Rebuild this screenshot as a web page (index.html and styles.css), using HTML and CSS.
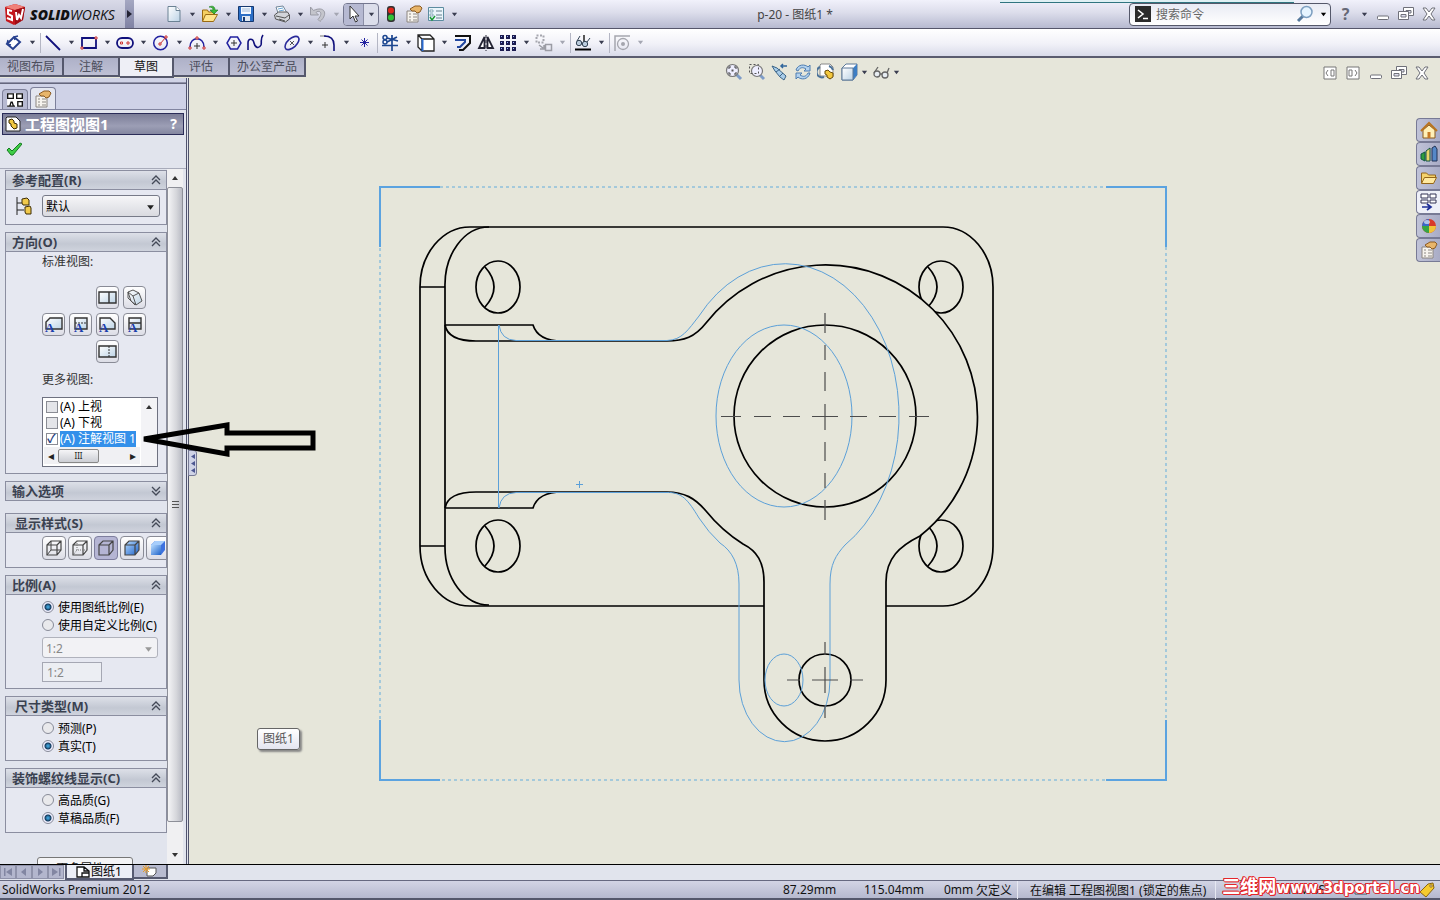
FILE: index.html
```
<!DOCTYPE html>
<html lang="zh-CN">
<head>
    <meta charset="UTF-8">
    <meta name="viewport" content="width=device-width, initial-scale=1.0">
    <title>p-20 - 图纸1</title>
    <link rel="stylesheet" href="styles.css">
</head>
<body>
    <!-- iconos compartidos -->
    <svg class="defs" width="0" height="0">
        <defs>
            <linearGradient id="gBlue" x1="0" y1="0" x2="1" y2="1"><stop offset="0" stop-color="#b8dcff"/><stop offset="1" stop-color="#1d62c9"/></linearGradient>
            <linearGradient id="gPale" x1="0" y1="0" x2="1" y2="1"><stop offset="0" stop-color="#fff"/><stop offset="1" stop-color="#bcd3e6"/></linearGradient>
        </defs>
        <symbol id="down" viewBox="0 0 8 8"><path d="M1 2h6L4 6z" fill="currentColor"/></symbol>
        <symbol id="props" viewBox="0 0 18 18"><path d="M2 6h11v11H2z" fill="#f6f3ee" stroke="#8b8580"/><path d="M4 9h2M8 9h4M4 12h2M8 12h4M4 15h2M8 15h4" stroke="#8d8985"/><path d="M5 4l5-3h5l2 2-2 4-3 1-2-2H7z" fill="#e8b56a" stroke="#8c5b22"/></symbol>
        <symbol id="minw" viewBox="0 0 16 16"><rect x="2.500" y="10" width="11" height="3.500" rx="1" fill="#fff" stroke="#6f7079"/></symbol>
        <symbol id="restore" viewBox="0 0 16 16"><path d="M5.500 1.500h10v8h-10z" fill="#fff" stroke="#6f7079"/><path d="M8 4.500h5v2.500H8z" fill="#dde" stroke="#6f7079"/><path d="M.5 5.500h10v8H.5z" fill="#fff" stroke="#6f7079"/><path d="M3 8.500h5V11H3z" fill="#dde" stroke="#6f7079"/></symbol>
        <symbol id="closew" viewBox="0 0 16 16"><path d="M2 2h3l3 4 3-4h3l-4 6 4 6h-3l-3-4-3 4H2l4-6z" fill="#fff" stroke="#6f7079"/></symbol>
        <symbol id="layout" viewBox="0 0 16 16"><path d="M1 2h14v12H1z" fill="#fff"/><path d="M1.500 2.500h5v4h-5zM9.500 2.500h5v4h-5zM1 13.500h7M3.500 13l1-3h1l1 3M10.500 9.500h4v4h-4z" fill="#fff" stroke="#111" stroke-width="1.200"/></symbol>
        <symbol id="up2" viewBox="0 0 10 10"><path d="M1 5l4-4 4 4M1 9l4-4 4 4" fill="none" stroke="#444a58" stroke-width="1.300"/></symbol>
        <symbol id="cube" viewBox="0 0 18 18"><path d="M2 6l4-4h10v9l-4 5H2zM2 6h10v10M12 6l4-4" stroke="#444" stroke-width="1.200"/></symbol>
        <symbol id="part" viewBox="0 0 16 16"><path d="M2 1h9l4 4v10H1V2z" fill="#fff" stroke="#222"/><path d="M4 4l3-1 2 2v2l3 1v4l-3 1-3-3V8L4 7z" fill="#f0c840" stroke="#3a2a00"/></symbol>
    </svg>

    <header class="titlebar">
        <div class="brand">
            <svg width="24" height="22" viewBox="0 0 24 22"><path d="M3 4l10-3 10 3-2 13-9 5-8-4z" fill="#c5161c"/><path d="M3 4l10-3 10 3-10 3z" fill="#f08078"/><path d="M13 7v15l8-5 2-13z" fill="#a00c14"/><path d="M10 8L6 7v4l4 2v4l-5-2M14 9l1 8 2-5 2 3 2-9" fill="none" stroke="#fff" stroke-width="2"/></svg>
            <span class="brand-name"><b>SOLID</b>WORKS</span>
        </div>
        <button class="brand-more" aria-label="菜单"><svg width="5" height="8" viewBox="0 0 5 8"><path d="M0 0l5 4-5 4z" fill="#223"/></svg></button>
        <nav class="tools quick">
            <button class="tool" aria-label="新建"><svg width="18" height="18" viewBox="0 0 18 18"><path d="M3 1.500h8l4 4v11H3z" fill="url(#gPale)" stroke="#6b8294"/><path d="M11 1.500v4h4" fill="#fff" stroke="#6b8294"/></svg></button>
            <button class="arrow" aria-label="更多"><svg><use href="#down"/></svg></button>
            <button class="tool" aria-label="打开"><svg width="18" height="18" viewBox="0 0 18 18"><path d="M1.500 16V5h5l1 2h6v3" fill="#f5cf62" stroke="#9a6a12"/><path d="M1.500 16.500l3-7h12l-4 7z" fill="#ffe48c" stroke="#9a6a12"/><path d="M8 2c4-2 6 0 6 3h3l-4 4-4-4h3c0-2-1-3-4-3z" fill="#3db83a" stroke="#187a1c" stroke-width=".6"/></svg></button>
            <button class="arrow" aria-label="更多"><svg><use href="#down"/></svg></button>
            <button class="tool" aria-label="保存"><svg width="18" height="18" viewBox="0 0 18 18"><path d="M1.500 1.500h15v15h-13l-2-2z" fill="#2c6fc6" stroke="#16386f"/><path d="M4 2h10v7H4z" fill="#f4f9ff"/><path d="M5 4h8M5 6h8" stroke="#9fb8d8"/><path d="M5 11h8v5H5z" fill="#dfe8f2"/><path d="M6 12h2v4H6z" fill="#16386f"/></svg></button>
            <button class="arrow" aria-label="更多"><svg><use href="#down"/></svg></button>
            <button class="tool" aria-label="打印"><svg width="18" height="18" viewBox="0 0 18 18"><path d="M5 8L3 2l7-1 4 7z" fill="#fff" stroke="#71879a"/><path d="M5 4l5-1M6 6l5-1" stroke="#69a7d8"/><path d="M1.500 10l4-3h9l2 3v4l-4 3-10-3z" fill="#d2d5da" stroke="#555"/><path d="M3 11l9 2 4-3M6 14l6 2" stroke="#555" fill="none"/></svg></button>
            <button class="arrow" aria-label="更多"><svg><use href="#down"/></svg></button>
            <button class="tool" aria-label="撤消"><svg width="18" height="18" viewBox="0 0 18 18"><path d="M1.500 2v8h8L7 7.500c3-3 8 0 2 7l2 2c9-8 4-16-6.500-11z" fill="#c4c5cc" stroke="#9a9ba5"/></svg></button>
            <button class="arrow off" aria-label="更多"><svg><use href="#down"/></svg></button>
            <div class="picked">
                <button class="tool" aria-label="选择"><svg width="18" height="18" viewBox="0 0 18 18"><path d="M5 1v13l3-3 2.500 6 2-1-2.500-5h4z" fill="#fff" stroke="#333"/></svg></button>
                <button class="arrow" aria-label="更多"><svg><use href="#down"/></svg></button>
            </div>
            <button class="tool solo" aria-label="重建模型"><svg width="18" height="18" viewBox="0 0 18 18"><rect x="5" y="1" width="8" height="16" rx="3" fill="#333"/><circle cx="9" cy="5.500" r="3" fill="#e0261c"/><circle cx="9" cy="12.500" r="3" fill="#2fc235"/></svg></button>
            <button class="tool solo" aria-label="属性"><svg width="18" height="18"><use href="#props"/></svg></button>
            <button class="tool" aria-label="选项"><svg width="18" height="18" viewBox="0 0 18 18"><path d="M1.500 2.500h15v13h-15z" fill="#eaf5fb" stroke="#5c8ca0"/><path d="M3 5h3v2H3zM3 9h3v2H3z" fill="#fff" stroke="#5c8ca0" stroke-width=".7"/><path d="M9 6h6M9 10h6M9 13h6" stroke="#67828f"/><path d="M3 12l2 3 3-4" fill="none" stroke="#1a9a35" stroke-width="1.500"/></svg></button>
            <button class="arrow" aria-label="更多"><svg><use href="#down"/></svg></button>
        </nav>
        <h1 class="doc-title">p-20 - 图纸1 *</h1>
        <div class="search">
            <svg width="16" height="16" viewBox="0 0 16 16"><rect width="16" height="16" fill="#2b2b2b"/><path d="M3 4l5 4-5 4M8 12.500h5" fill="none" stroke="#fff" stroke-width="1.600"/></svg>
            <input type="text" aria-label="搜索命令" placeholder="搜索命令">
            <button class="find" aria-label="搜索"><svg width="18" height="18" viewBox="0 0 18 18"><path d="M7 11l-5 5" stroke="#56799c" stroke-width="3"/><circle cx="10.500" cy="7" r="5.500" fill="#e6f4ff" stroke="#7d9fc0" stroke-width="1.500"/></svg></button>
            <button class="arrow dark" aria-label="更多"><svg><use href="#down"/></svg></button>
        </div>
        <div class="window-buttons">
            <button class="tool solo help" aria-label="帮助">?</button>
            <button class="arrow" aria-label="更多"><svg><use href="#down"/></svg></button>
            <button class="tool solo" aria-label="最小化"><svg width="16" height="16"><use href="#minw"/></svg></button>
            <button class="tool solo" aria-label="还原"><svg width="16" height="16"><use href="#restore"/></svg></button>
            <button class="tool solo" aria-label="关闭"><svg width="16" height="16"><use href="#closew"/></svg></button>
        </div>
    </header>

    <nav class="tools sketchbar">
        <button class="tool" aria-label="智能尺寸"><svg width="18" height="18" viewBox="0 0 18 18"><path d="M2 10l7-7 6 5-7 7z" fill="#fff" stroke="#27408f" stroke-width="2"/><path d="M2 10l1-4M2 10l4 1M9 3l4-1M9 3l1 3" stroke="#27408f" stroke-width="1.500"/></svg></button>
        <button class="arrow" aria-label="更多"><svg><use href="#down"/></svg></button>
        <span class="sep"></span>
        <button class="tool" aria-label="直线"><svg width="18" height="18" viewBox="0 0 18 18"><path d="M2 2l14 14" stroke="#10107c" stroke-width="1.800"/></svg></button>
        <button class="arrow" aria-label="更多"><svg><use href="#down"/></svg></button>
        <button class="tool" aria-label="矩形"><svg width="18" height="18" viewBox="0 0 18 18"><path d="M2 4h14v10H2z" fill="none" stroke="#10107c" stroke-width="1.800"/><path d="M1 13h2v2H1zM15 3h2v2h-2z" fill="#fff" stroke="#c33"/></svg></button>
        <button class="arrow" aria-label="更多"><svg><use href="#down"/></svg></button>
        <button class="tool" aria-label="槽口"><svg width="18" height="18" viewBox="0 0 18 18"><rect x="1" y="4" width="16" height="10" rx="5" fill="none" stroke="#10107c" stroke-width="1.800"/><path d="M4.500 8h2v2h-2zM11 8h2v2h-2z" fill="#fff" stroke="#c33"/></svg></button>
        <button class="arrow" aria-label="更多"><svg><use href="#down"/></svg></button>
        <button class="tool" aria-label="圆"><svg width="18" height="18" viewBox="0 0 18 18"><circle cx="8.500" cy="9" r="6.800" fill="none" stroke="#2222a0" stroke-width="1.500"/><path d="M8 10l6-7" stroke="#c33"/><path d="M7 9h2v2H7zM13 2h2v2h-2z" fill="#fff" stroke="#c33"/></svg></button>
        <button class="arrow" aria-label="更多"><svg><use href="#down"/></svg></button>
        <button class="tool" aria-label="圆弧"><svg width="18" height="18" viewBox="0 0 18 18"><path d="M2 13C2 2 16 2 16 13" fill="none" stroke="#2222a0" stroke-width="1.500"/><path d="M9 9v6M6 12h6" stroke="#333"/><path d="M1 13h2v2H1zM15 13h2v2h-2zM8 3h2v2H8z" fill="#fff" stroke="#c33"/></svg></button>
        <button class="arrow" aria-label="更多"><svg><use href="#down"/></svg></button>
        <button class="tool solo" aria-label="多边形"><svg width="18" height="18" viewBox="0 0 18 18"><path d="M5.500 3h7L16 9l-3.500 6h-7L2 9z" fill="none" stroke="#2222a0" stroke-width="1.500"/><path d="M9 6v6M6 9h6" stroke="#333"/></svg></button>
        <button class="tool" aria-label="样条曲线"><svg width="18" height="18" viewBox="0 0 18 18"><path d="M1 16V9c0-5 5-5 6 0s5 6 7 2c1-3-1-6 2-10" fill="none" stroke="#10107c" stroke-width="1.600"/></svg></button>
        <button class="arrow" aria-label="更多"><svg><use href="#down"/></svg></button>
        <button class="tool" aria-label="椭圆"><svg width="18" height="18" viewBox="0 0 18 18"><ellipse cx="9" cy="9" rx="8.500" ry="4.500" transform="rotate(-42 9 9)" fill="none" stroke="#2a2a9a" stroke-width="1.600"/><path d="M7 7l4 4M11 7l-4 4" stroke="#555"/></svg></button>
        <button class="arrow" aria-label="更多"><svg><use href="#down"/></svg></button>
        <button class="tool" aria-label="圆角"><svg width="18" height="18" viewBox="0 0 18 18"><path d="M1 2h6" stroke="#777"/><path d="M5 2c8 0 10 4 10 9v6" fill="none" stroke="#10107c" stroke-width="1.600"/><path d="M6 8v6M3 11h6" stroke="#333"/></svg></button>
        <button class="arrow" aria-label="更多"><svg><use href="#down"/></svg></button>
        <button class="tool solo" aria-label="点"><svg width="18" height="18" viewBox="0 0 18 18"><path d="M8.500 4v9M4 8.500h9M5.500 5.500l6 6M11.500 5.500l-6 6" stroke="#2222a0"/></svg></button>
        <span class="sep"></span>
        <button class="tool" aria-label="剪裁"><svg width="18" height="18" viewBox="0 0 18 18"><path d="M1 11.500h16M11 1v16M6 8l10-5M6 4l11 3" stroke="#1b458f" stroke-width="1.700"/><circle cx="4" cy="3.500" r="2" fill="none" stroke="#1b458f" stroke-width="1.500"/><circle cx="4" cy="8" r="2" fill="none" stroke="#1b458f" stroke-width="1.500"/></svg></button>
        <button class="arrow" aria-label="更多"><svg><use href="#down"/></svg></button>
        <button class="tool" aria-label="转换实体"><svg width="18" height="18" viewBox="0 0 18 18"><path d="M1 1h12l4 4v12H5l-4-4zM1 1l4 4h12M5 5v12" fill="#fff" stroke="#222" stroke-width="1.300"/><path d="M5.500 5v12" stroke="#2a6ad0" stroke-width="2"/></svg></button>
        <button class="arrow" aria-label="更多"><svg><use href="#down"/></svg></button>
        <button class="tool solo" aria-label="等距实体"><svg width="18" height="18" viewBox="0 0 18 18"><path d="M1 2h15v7l-7 7H5" fill="none" stroke="#111" stroke-width="2"/><path d="M1 6h10v2l-5 5H3" fill="none" stroke="#2348a0" stroke-width="2"/></svg></button>
        <button class="tool solo" aria-label="镜向"><svg width="18" height="18" viewBox="0 0 18 18"><path d="M7.500 3v11H2zM10.500 3v11H16z" fill="#fff" stroke="#223" stroke-width="1.800"/><path d="M9 1v16" stroke="#223" stroke-dasharray="3 2"/></svg></button>
        <button class="tool" aria-label="线性阵列"><svg width="18" height="18" viewBox="0 0 18 18"><path d="M1 1h4v4H1zM7 1h4v4H7zM13 1h4v4h-4zM1 7h4v4H1zM7 7h4v4H7zM13 7h4v4h-4zM1 13h4v4H1zM7 13h4v4H7zM13 13h4v4h-4z" fill="#1c1c50"/><path d="M2 2h1v1H2zM8 2h1v1H8zM14 2h1v1h-1zM2 8h1v1H2zM8 8h1v1H8zM14 8h1v1h-1zM2 14h1v1H2zM8 14h1v1H8zM14 14h1v1h-1z" fill="#9cb4ff"/></svg></button>
        <button class="arrow" aria-label="更多"><svg><use href="#down"/></svg></button>
        <button class="tool" aria-label="移动实体"><svg width="18" height="18" viewBox="0 0 18 18"><path d="M1.500 1.500h7v7h-7z" fill="none" stroke="#a5a6ae" stroke-width="2" stroke-dasharray="2 1.500"/><path d="M10.500 10.500h6v6h-6zM4 11l4 3M5 15h4v-4" fill="none" stroke="#9b9ca4" stroke-width="1.500"/></svg></button>
        <button class="arrow off" aria-label="更多"><svg><use href="#down"/></svg></button>
        <span class="sep"></span>
        <button class="tool" aria-label="显示几何关系"><svg width="18" height="18" viewBox="0 0 18 18"><path d="M1 15.500h16" stroke="#000" stroke-width="2"/><path d="M10 1v11" stroke="#222" stroke-width="1.500"/><circle cx="5" cy="9" r="2.700" fill="#bcd" stroke="#345"/><circle cx="11" cy="10" r="2.700" fill="#bcd" stroke="#345"/><path d="M3 7l3-5M13 8l3-4" stroke="#345"/></svg></button>
        <button class="arrow" aria-label="更多"><svg><use href="#down"/></svg></button>
        <span class="sep"></span>
        <button class="tool" aria-label="快速捕捉"><svg width="18" height="18" viewBox="0 0 18 18"><path d="M2 17V2h15" fill="none" stroke="#a5a6ae" stroke-width="1.500"/><circle cx="10" cy="10" r="5.500" fill="none" stroke="#a5a6ae" stroke-width="1.300"/><circle cx="10" cy="10" r="2" fill="#a5a6ae"/></svg></button>
        <button class="arrow off" aria-label="更多"><svg><use href="#down"/></svg></button>
    </nav>

    <main class="workspace">
        <div class="top-row">
            <div class="ribbon-tabs">
                <button>视图布局</button>
                <button>注解</button>
                <button class="active">草图</button>
                <button>评估</button>
                <button>办公室产品</button>
            </div>
            <div class="view-tools">
                <button class="tool solo" aria-label="整屏显示"><svg width="18" height="18" viewBox="0 0 18 18"><path d="M11 11l5 5" stroke="#7e9cc8" stroke-width="3"/><circle cx="7.500" cy="7.500" r="6" fill="#eef" stroke="#777" stroke-width="1.200"/><path d="M4 6V4h2M9 4h2v2M11 9v2H9M6 11H4V9" fill="none" stroke="#444"/><path d="M6.500 6.500h2v2h-2z" fill="#555"/></svg></button>
                <button class="tool solo" aria-label="局部放大"><svg width="18" height="18" viewBox="0 0 18 18"><path d="M12 12l4 4" stroke="#7e9cc8" stroke-width="3"/><circle cx="9" cy="8" r="5.500" fill="#eef" stroke="#777" stroke-width="1.200"/><path d="M1.500 1.500h9v9h-9z" fill="none" stroke="#555" stroke-dasharray="2 2"/></svg></button>
                <button class="tool solo" aria-label="上一视图"><svg width="18" height="18" viewBox="0 0 18 18"><path d="M1 3l5 2 9 8-2 4-4-3-5-6z" fill="#a9cdea" stroke="#3a6386"/><path d="M5 9l4-3M9 13l3-3" stroke="#3a6386"/><path d="M16 3h-6M12 1l-2 2 2 2" fill="none" stroke="#31669c" stroke-width="1.500"/></svg></button>
                <button class="tool solo" aria-label="旋转视图"><svg width="18" height="18" viewBox="0 0 18 18"><path d="M2 7c2-6 9-6 12-3l2-2v6h-6l2-2C9 4 6 4 4 8zM16 10c-2 7-9 7-12 4l-2 2v-6h6l-2 2c3 2 6 2 8-2z" fill="#b3d2ef" stroke="#4e7db0"/></svg></button>
                <button class="tool solo" aria-label="3D 工程图视图"><svg width="18" height="18" viewBox="0 0 18 18"><path d="M4 1h9l3 3v9H3V2z" fill="#fff" stroke="#888"/><path d="M3 4a5 5 0 0 0 4 10M12 3a6 6 0 0 1 4 4" fill="none" stroke="#4b7299" stroke-width="2"/><path d="M8 8l3-1 2 2 3 1v4l-3 2-3-2v-2l-2-1z" fill="#f3c83e" stroke="#6b4c07"/></svg></button>
                <button class="tool" aria-label="显示样式"><svg width="18" height="18" viewBox="0 0 18 18"><path d="M2 5l4-4h11v11l-4 5H2z" fill="#fff" stroke="#5c7898"/><path d="M13 5l4-4v11l-4 5z" fill="#3d7ec4"/><path d="M2 5h11v12H2z" fill="url(#gPale)" stroke="#5c7898"/></svg></button>
                <button class="arrow narrow" aria-label="更多"><svg><use href="#down"/></svg></button>
                <button class="tool" aria-label="隐藏项目"><svg width="18" height="18" viewBox="0 0 18 18"><circle cx="5" cy="11" r="3" fill="#e7edf2" stroke="#666" stroke-width="1.300"/><circle cx="13" cy="12" r="3" fill="#e7edf2" stroke="#666" stroke-width="1.300"/><path d="M8 11h2M2 10l4-6M15 10l2-5" fill="none" stroke="#666" stroke-width="1.300"/></svg></button>
                <button class="arrow narrow" aria-label="更多"><svg><use href="#down"/></svg></button>
            </div>
            <div class="window-buttons child">
                <button class="tool solo" aria-label="左窗格"><svg width="14" height="14" viewBox="0 0 14 14"><path d="M1 1h12v12H1z" fill="#fff" stroke="#777"/><path d="M5 4L3 7l2 3M8 4h3v6H8z" fill="none" stroke="#777"/></svg></button>
                <button class="tool solo" aria-label="右窗格"><svg width="14" height="14" viewBox="0 0 14 14"><path d="M1 1h12v12H1z" fill="#fff" stroke="#777"/><path d="M9 4l2 3-2 3M3 4h3v6H3z" fill="none" stroke="#777"/></svg></button>
                <button class="tool solo" aria-label="最小化"><svg width="16" height="16"><use href="#minw"/></svg></button>
                <button class="tool solo" aria-label="还原"><svg width="16" height="16"><use href="#restore"/></svg></button>
                <button class="tool solo" aria-label="关闭"><svg width="16" height="16"><use href="#closew"/></svg></button>
            </div>
        </div>

        <div class="content">
            <aside class="panel">
                <div class="panel-grip"></div>
                <div class="panel-tabs">
                    <button aria-label="设计树"><svg width="18" height="18"><use href="#layout"/></svg></button>
                    <button class="active" aria-label="属性管理器"><svg width="18" height="18"><use href="#props"/></svg></button>
                </div>
                <div class="panel-title">
                    <svg width="16" height="16"><use href="#part"/></svg>
                    <h2>工程图视图1</h2>
                    <button aria-label="帮助">?</button>
                </div>
                <div class="panel-ok">
                    <button aria-label="确定"><svg width="16" height="14" viewBox="0 0 16 14"><path d="M1 8l2-2 3 3 8-8 2 1-9 11H5z" fill="#3fce46" stroke="#167a22"/></svg></button>
                </div>
                <div class="panel-scroll">
                    <div class="groups">
                        <section class="group">
                            <h3>参考配置(R)<svg width="10" height="10"><use href="#up2"/></svg></h3>
                            <div class="config">
                                <svg width="16" height="18" viewBox="0 0 16 18"><path d="M1 0v18M1 6h5M1 13h7" stroke="#222" fill="none"/><path d="M6 2l5-1 2 2v5H7L6 6zM9 10l5-1 1 2v6h-5l-1-2z" fill="#f1c94b" stroke="#3c2c05"/></svg>
                                <div class="combo">
                                    <select aria-label="参考配置"><option>默认</option></select>
                                    <svg><use href="#down"/></svg>
                                </div>
                            </div>
                        </section>

                        <section class="group">
                            <h3>方向(O)<svg width="10" height="10"><use href="#up2"/></svg></h3>
                            <div class="indent">
                                <p class="caption">标准视图:</p>
                                <div class="std-views">
                                    <button class="c3" aria-label="上视"><svg width="19" height="17" viewBox="0 0 19 17"><path d="M1 3h17v11H1z" fill="url(#gPale)" stroke="#333" stroke-width="1.400"/><path d="M11 3v11" stroke="#333" stroke-width="1.400"/></svg></button>
                                    <button aria-label="等轴测"><svg width="19" height="17" viewBox="0 0 19 17"><path d="M3 3l5-2 6 3 3 8-6 4-5-4zM3 3l5 4 3 9M8 7l6-3M3 3v6l7 7" fill="url(#gPale)" stroke="#555"/></svg></button>
                                    <button class="c1" aria-label="前视"><svg width="19" height="17" viewBox="0 0 19 17"><path d="M6 2h12v11H2V6z" fill="url(#gPale)" stroke="#333" stroke-width="1.400"/><text x="1" y="16">A</text></svg></button>
                                    <button aria-label="左视"><svg width="19" height="17" viewBox="0 0 19 17"><path d="M4 2h12v11H4z" fill="url(#gPale)" stroke="#333" stroke-width="1.400"/><path d="M4 7h12" stroke="#333" stroke-dasharray="2 1"/><text x="3" y="16">A</text></svg></button>
                                    <button aria-label="后视"><svg width="19" height="17" viewBox="0 0 19 17"><path d="M2 2h10l5 5v6H2z" fill="url(#gPale)" stroke="#333" stroke-width="1.400"/><text x="1" y="16">A</text></svg></button>
                                    <button aria-label="右视"><svg width="19" height="17" viewBox="0 0 19 17"><path d="M4 2h12v11H4zM4 7h12" fill="url(#gPale)" stroke="#333" stroke-width="1.400"/><text x="3" y="16">A</text></svg></button>
                                    <button class="c3" aria-label="下视"><svg width="19" height="17" viewBox="0 0 19 17"><path d="M1 3h17v11H1z" fill="url(#gPale)" stroke="#333" stroke-width="1.400"/><path d="M11 3v11" stroke="#333" stroke-dasharray="2 1"/></svg></button>
                                </div>
                                <p class="caption more">更多视图:</p>
                                <div class="listbox">
                                    <label><input type="checkbox"><span>(A) 上视</span></label>
                                    <label><input type="checkbox"><span>(A) 下视</span></label>
                                    <label><input type="checkbox" checked><span class="sel">(A) 注解视图 1</span></label>
                                    <div class="hscroll"><span>◂</span><i>III</i><span>▸</span></div>
                                    <span class="vscroll"></span>
                                </div>
                            </div>
                        </section>

                        <section class="group folded">
                            <h3>输入选项<svg class="flip" width="10" height="10"><use href="#up2"/></svg></h3>
                        </section>

                        <section class="group">
                            <h3 class="in">显示样式(S)<svg width="10" height="10"><use href="#up2"/></svg></h3>
                            <div class="styles-row">
                                <button aria-label="线架图"><svg width="18" height="18" viewBox="0 0 18 18" fill="none"><use href="#cube"/><path d="M6 2v9h10M6 11l-4 5" stroke="#444"/></svg></button>
                                <button aria-label="隐藏线可见"><svg width="18" height="18" viewBox="0 0 18 18" fill="none"><use href="#cube"/><path d="M6 2v9h10M6 11l-4 5" stroke="#777" stroke-dasharray="1 1"/></svg></button>
                                <button class="on" aria-label="消除隐藏线"><svg width="18" height="18" fill="none"><use href="#cube"/></svg></button>
                                <button aria-label="带边线上色"><svg width="18" height="18" fill="url(#gBlue)"><use href="#cube"/></svg></button>
                                <button aria-label="上色"><svg width="18" height="18" viewBox="0 0 18 18"><path d="M2 6l4-4h10v9l-4 5H2z" fill="#3e72df"/><path d="M2 6l4-4h10l-4 4z" fill="#a6cdfb"/><path d="M2 6h10v10H2z" fill="url(#gBlue)"/></svg></button>
                            </div>
                        </section>

                        <section class="group">
                            <h3>比例(A)<svg width="10" height="10"><use href="#up2"/></svg></h3>
                            <div class="indent radios">
                                <label><input type="radio" name="scale" checked>使用图纸比例(E)</label>
                                <label><input type="radio" name="scale">使用自定义比例(C)</label>
                                <div class="combo off">
                                    <select aria-label="比例" disabled><option>1:2</option></select>
                                    <svg><use href="#down"/></svg>
                                </div>
                                <input class="ratio" type="text" aria-label="自定义比例" value="1:2" disabled>
                            </div>
                        </section>

                        <section class="group">
                            <h3 class="in">尺寸类型(M)<svg width="10" height="10"><use href="#up2"/></svg></h3>
                            <div class="indent radios roomy">
                                <label><input type="radio" name="dim">预测(P)</label>
                                <label><input type="radio" name="dim" checked>真实(T)</label>
                            </div>
                        </section>

                        <section class="group">
                            <h3>装饰螺纹线显示(C)<svg width="10" height="10"><use href="#up2"/></svg></h3>
                            <div class="indent radios roomy">
                                <label><input type="radio" name="thread">高品质(G)</label>
                                <label><input type="radio" name="thread" checked>草稿品质(F)</label>
                            </div>
                        </section>
                        <button class="more-props">更多属性...</button>
                    </div>
                    <div class="scrollbar"><span class="up"></span><div class="thumb"><i></i></div><span class="dn"></span></div>
                </div>
                <div class="splitter">
                    <svg width="4" height="20" viewBox="0 0 4 20"><path d="M4 0v5L0 2.500zM4 7v5L0 9.500zM4 14v5L0 16.500z" fill="#4c5790"/></svg>
                </div>
            </aside>

            <div class="sheet">
                <svg class="drawing" viewBox="189 78 1251 786" preserveAspectRatio="xMinYMin meet" fill="none">
                    <!-- marco de la vista -->
                    <path d="M380 187H1166V780H380z" stroke="#8fc0dc" stroke-width="1.500" stroke-dasharray="3 3"/>
                    <path d="M440 187H380V247M1106 187H1166V247M440 780H380V720M1106 780H1166V720" stroke="#5ba3e0" stroke-width="2"/>
                    <!-- placa base -->
                    <g stroke="#000" stroke-width="1.700">
                        <path d="M764 606H470A50 60 0 0 1 420 546V287A50 60 0 0 1 470 227H943A50 60 0 0 1 993 287V546A50 60 0 0 1 943 606H886"/>
                        <path d="M489 227A44 58 0 0 0 445 287V546A44 58 0 0 0 489 605M420 287H445M420 546H445"/>
                        <ellipse cx="498" cy="287" rx="22" ry="26"/><path d="M485 267Q503 287 485 307"/>
                        <ellipse cx="498" cy="546" rx="22" ry="26"/><path d="M485 526Q503 546 485 566"/>
                        <ellipse cx="941" cy="287" rx="22" ry="26"/><path d="M928 267Q946 287 928 307"/>
                        <ellipse cx="941" cy="546" rx="22" ry="26"/><path d="M928 526Q946 546 928 566"/>
                        <path d="M445 325H533Q538 341 562 341M445 325Q448 341 476 341H667"/>
                        <path d="M445 508H533Q538 492 562 492M445 508Q448 492 476 492H667"/>
                        <!-- brazo -->
                        <path fill="#e6e6da" d="M667 341C684 341 695 337 706 323A152 152 0 1 1 920 536C900 546 886 558 886 582V680A61 61 0 0 1 764 680V582C764 562 757 551 743 544A152 152 0 0 1 706 511C695 498 684 492 667 492"/>
                        <circle cx="825" cy="416" r="91"/>
                        <circle cx="825" cy="680" r="26"/>
                    </g>
                    <!-- silueta resaltada -->
                    <g stroke="#5ca0d8">
                        <path d="M498.500 325V508M499 325Q501 340 516 340.500H667C682 340 688 330 699 316A114 152 0 1 1 845 545C836 555 830 564 830 584V680A45 61 0 0 1 739 680V584C739 564 732 551 720 543A114 152 0 0 1 699 518C688 500 682 492 667 492.500H516Q501 493 499 508"/>
                        <ellipse cx="784" cy="416" rx="68" ry="91"/>
                        <ellipse cx="784" cy="680" rx="19" ry="26"/>
                        <path d="M576 484.500h7M579.500 481v7"/>
                    </g>
                    <path stroke="#4c4c4c" stroke-width="1.200" d="M721 416.500h20M754 416.500h17M783 416.500h17M812 416.500h26M850 416.500h17M879 416.500h17M909 416.500h20M825 313v20M825 372v19M825 404v26M825 442v19M825 500v20M787 680h13M812 680h26M850 680h13M825 642v13M825 667v26M825 705v13M825 345v15M825 473v15"/>
                </svg>
                <span class="tip">图纸1</span>
                <div class="task-pane">
                    <button aria-label="资源"><svg width="18" height="18" viewBox="0 0 18 18"><path d="M3 9v8h12V9L9 4z" fill="#fff0b8" stroke="#8b5a1d"/><path d="M1 10l8-8 8 8" fill="none" stroke="#b8741f" stroke-width="2"/><path d="M7.500 11h3v6h-3z" fill="#c77a28"/></svg></button>
                    <button aria-label="设计库"><svg width="18" height="18" viewBox="0 0 18 18"><path d="M1 9l4-2v9l-4-2z" fill="#2f9e3c" stroke="#154"/><path d="M6 6l4-3v13H6z" fill="#e8d66a" stroke="#154"/><path d="M12 3l3-2 2 3v12h-5z" fill="#5588c8" stroke="#235"/></svg></button>
                    <button aria-label="文件探索器"><svg width="18" height="18" viewBox="0 0 18 18"><path d="M1.500 14V4h5l2 2h7v3" fill="#f5d36c" stroke="#94661a"/><path d="M1.500 14.500l3-6h12l-3 6z" fill="#ffe9a0" stroke="#94661a"/></svg></button>
                    <button class="active" aria-label="视图调色板"><svg width="18" height="18" viewBox="0 0 18 18"><path d="M1 1h7v4H1zM10 1h6v4h-6zM1 7h7v3H1zM10 7h6v3h-6z" fill="#fff" stroke="#335"/><path d="M2 14h8M7 11l4 3-4 3" stroke="#1f2f98" stroke-width="1.700" fill="none"/></svg></button>
                    <button aria-label="外观"><svg width="18" height="18" viewBox="0 0 18 18"><circle cx="9" cy="9" r="7" fill="#d93a28"/><path d="M9 9V2a7 7 0 0 0-7 7z" fill="#3a68c8"/><path d="M9 9H2a7 7 0 0 0 7 7z" fill="#37a544"/><path d="M9 9h7a7 7 0 0 1-7 7z" fill="#f0c53b"/><ellipse cx="7" cy="5" rx="3" ry="2" fill="#fff" opacity=".6"/></svg></button>
                    <button aria-label="自定义属性"><svg width="18" height="18"><use href="#props"/></svg></button>
                </div>
            </div>
        </div>
        <svg class="callout" width="180" height="40" viewBox="0 0 180 40"><path d="M7 20L90 6v8h86v15H90v6z" fill="none" stroke="#000" stroke-width="5"/></svg>
    </main>

    <div class="sheet-tabs">
        <button class="nav" aria-label="第一张"><svg width="10" height="10" viewBox="0 0 10 10"><path d="M1 1h1.500v8H1zM9 1v8L3 5z"/></svg></button>
        <button class="nav" aria-label="上一张"><svg width="10" height="10" viewBox="0 0 10 10"><path d="M7 1v8L2 5z"/></svg></button>
        <button class="nav" aria-label="下一张"><svg width="10" height="10" viewBox="0 0 10 10"><path d="M3 1v8l5-4z"/></svg></button>
        <button class="nav" aria-label="最后一张"><svg width="10" height="10" viewBox="0 0 10 10"><path d="M1 1v8l6-4zM8 1h1.500v8H8z"/></svg></button>
        <button class="sheet-tab"><svg width="14" height="12" viewBox="0 0 14 12"><path d="M1 1h7l5 4v6H1zM8 1v4h5M6 11V7h7" fill="#fff" stroke="#111" stroke-width="1.300"/></svg>图纸1</button>
        <button class="add-sheet" aria-label="添加图纸"><svg width="16" height="12" viewBox="0 0 16 12"><path d="M5 3h9v5l-3 3H5z" fill="#fff" stroke="#555"/><path d="M4 0v8M0 4h8M1 1l6 6M7 1L1 7" stroke="#e79a26"/></svg></button>
    </div>
    <footer class="statusbar">
        <span class="product">SolidWorks Premium 2012</span>
        <span class="x">87.29mm</span>
        <span class="y">115.04mm</span>
        <span class="z">0mm</span>
        <span class="state">欠定义</span>
        <span class="editing">在编辑 工程图视图1 (锁定的焦点)</span>
        <span class="units">MMGS</span>
        <svg width="14" height="12" viewBox="0 0 14 12"><path d="M1 1h12v9H1z" fill="#fff" stroke="#356"/><path d="M4 5h6l-3 3z" fill="#284"/></svg>
        <svg class="tag" width="16" height="16" viewBox="0 0 16 16"><path d="M1 10L9 2l5-1 1 5-8 9z" fill="#f6cb2d" stroke="#8a6510"/><circle cx="12" cy="4" r="1.200" fill="#fff" stroke="#8a6510"/></svg>
        <a class="watermark" href="#"><span>三维网</span>www.3dportal.cn</a>
    </footer>
</body>
</html>
```
FILE: styles.css
```
* {
    margin: 0;
    padding: 0;
    box-sizing: border-box;
}

body {
    display: flex;
    flex-direction: column;
    height: 100vh;
    overflow: hidden;
    background: #e6e6da;
    color: #222;
    font-family: "Noto Sans", "Noto Sans CJK SC", sans-serif;
    font-size: 12px;
}

button, input, select {
    font: inherit;
    color: inherit;
    border: none;
    background: none;
    border-radius: 0;
}

svg {
    display: block;
    flex-shrink: 0;
}

.defs {
    position: absolute;
}

/* barra de titulo */
.titlebar {
    position: relative;
    display: flex;
    align-items: center;
    height: 29px;
    flex-shrink: 0;
    background: linear-gradient(#f1f1fb, #dcddeb 45%, #b7bad0);
    border-bottom: 1px solid #55566a;
}

/* borde de la ventana de atras */
.titlebar::before {
    content: "";
    position: absolute;
    top: 0;
    right: 146px;
    width: 294px;
    height: 2px;
    background: #dff0f4;
    border-bottom: 1px solid #2f7580;
}

.brand {
    display: flex;
    align-items: center;
    gap: 4px;
    width: 125px;
    height: 28px;
    padding-left: 2px;
    background: linear-gradient(#d9dae8, #b8bbcf);
}

.brand-name {
    font-family: "Open Sans", sans-serif;
    font-style: italic;
    font-size: 14px;
    color: #111;
}

.brand-name b {
    font-weight: 800;
}

.brand-more {
    display: flex;
    align-items: center;
    justify-content: center;
    width: 9px;
    height: 28px;
    background: linear-gradient(#a5a8c2, #7f82a3);
}

.tools,
.view-tools,
.window-buttons {
    display: flex;
    align-items: center;
}

.quick {
    margin-left: 29px;
}

.tool {
    display: flex;
    align-items: center;
    justify-content: center;
    width: 22px;
    height: 22px;
    flex-shrink: 0;
}

.solo {
    width: 23px;
}

.arrow {
    display: flex;
    align-items: center;
    justify-content: center;
    width: 14px;
    height: 22px;
    flex-shrink: 0;
    color: #3a3d50;
}

.arrow svg,
.combo svg {
    width: 7px;
    height: 7px;
}

.arrow.off {
    color: #a4a6b2;
}

.arrow.dark {
    color: #000;
}

.arrow.narrow {
    width: 10px;
}

.picked {
    display: flex;
    width: 36px;
    height: 23px;
    align-items: center;
    border: 1px solid #74778f;
    border-radius: 4px;
    background: #dcdeeb;
}

.picked .tool {
    width: 20px;
    height: 21px;
    background: #b6b9d2;
    border-right: 1px solid #8b8ea6;
    border-radius: 3px 0 0 3px;
}

.doc-title {
    flex: 1;
    text-align: center;
    font-size: 12px;
    font-weight: normal;
    color: #444;
}

.search {
    display: flex;
    align-items: center;
    width: 202px;
    height: 23px;
    padding-left: 5px;
    border: 1px solid #55586a;
    border-radius: 4px;
    background: linear-gradient(#e9ebf4, #fff);
}

.search input {
    flex: 1;
    min-width: 0;
    padding-left: 5px;
    outline: none;
}

.search input::placeholder {
    color: #666;
    opacity: 1;
}

.find {
    width: 20px;
}

.window-buttons {
    width: 110px;
}

.titlebar .window-buttons {
    padding-left: 3px;
    width: 109px;
}

.help {
    font-size: 16px;
    font-weight: bold;
    color: #666876;
}

.sketchbar {
    height: 29px;
    flex-shrink: 0;
    padding-left: 3px;
    background: linear-gradient(#fff, #f1f1f8 55%, #d9dbe9);
    border-bottom: 2px solid #5a5c6e;
}

.sep {
    width: 1px;
    height: 20px;
    margin: 0 1px;
    background: #b4b6c4;
}

/* zona de trabajo */
.workspace {
    position: relative;
    display: flex;
    flex-direction: column;
    flex: 1;
    min-height: 0;
}

.top-row {
    display: flex;
    height: 20px;
    flex-shrink: 0;
}

.ribbon-tabs {
    display: flex;
    position: relative;
    z-index: 1;
}

.ribbon-tabs button {
    height: 19px;
    padding: 0 8px;
    line-height: 16px;
    color: #4c4e5c;
    background: linear-gradient(#aeb1c8, #bec0d4);
    border-right: 2px solid #55586c;
    border-bottom: 2px solid #55586c;
}

.ribbon-tabs button:first-child {
    padding: 0 7px;
}

.ribbon-tabs button:nth-child(2),
.ribbon-tabs button:nth-child(4) {
    padding: 0 15px;
}

.ribbon-tabs button.active {
    height: 20px;
    padding: 0 14px;
    color: #111;
    background: #eeeff6;
}

.ribbon-tabs button:last-child {
    padding: 0 7px;
}

.view-tools {
    flex: 1;
    justify-content: center;
    height: 28px;
}

.child {
    width: 122px;
    height: 30px;
}

.content {
    display: flex;
    flex: 1;
    min-height: 0;
}

.panel {
    position: relative;
    display: flex;
    flex-direction: column;
    width: 189px;
    flex-shrink: 0;
    background: #e1e4ed;
    border-right: 3px double #50536d;
}

.panel-grip {
    height: 6px;
    background: #8f91a8;
    border-top: 4px solid #d0d3e6;
    border-bottom: 1px solid #65677e;
}

.panel-tabs {
    display: flex;
    align-items: flex-end;
    gap: 2px;
    height: 26px;
    padding-left: 2px;
    background: #cfd2e7;
    border-bottom: 1px solid #8184a0;
}

.panel-tabs button {
    display: flex;
    align-items: center;
    justify-content: center;
    width: 26px;
    height: 20px;
    background: #b7bad2;
    border: 1px solid #7d809a;
    border-bottom: none;
    border-radius: 4px 4px 0 0;
}

.panel-tabs button.active {
    height: 22px;
    background: #e4e6f0;
}

.panel-title {
    display: flex;
    align-items: center;
    gap: 4px;
    height: 22px;
    margin: 3px 2px 0;
    padding: 0 6px 0 2px;
    color: #fff;
    background: linear-gradient(#7b7d97, #9c9eb5 60%, #8487a1);
    border: 1px solid #2a2c58;
}

.panel-title h2 {
    flex: 1;
    font-size: 15px;
    font-weight: bold;
    line-height: 18px;
}

.panel-title button {
    font-size: 14px;
    font-weight: bold;
    line-height: 18px;
}

.panel-ok {
    height: 34px;
    padding: 7px 6px 0;
    border-bottom: 1px solid #a8abba;
}

.panel-scroll {
    display: flex;
    flex: 1;
    min-height: 0;
    overflow: hidden;
}

.groups {
    flex: 1;
    min-width: 0;
    padding: 1px 0 0 5px;
}

.group {
    margin-bottom: 7px;
    border: 1px solid #8b8ea0;
    overflow: hidden;
    background: #e6e8f1;
}

.group.folded {
    margin-bottom: 12px;
}

.group h3 {
    display: flex;
    align-items: center;
    justify-content: space-between;
    height: 19px;
    padding: 0 5px 0 6px;
    font-size: 13px;
    font-weight: bold;
    line-height: 18px;
    color: #3a4150;
    background: linear-gradient(#dde0e8, #c3c8d3 60%, #cfd3dd);
    border-bottom: 1px solid #8b8ea0;
}

.group.folded h3 {
    border-bottom: none;
    height: 18px;
}

.group h3.in {
    padding-left: 9px;
}

.flip {
    transform: rotate(180deg);
}

.config {
    display: flex;
    align-items: center;
    gap: 10px;
    padding: 5px 6px 7px 10px;
}

.combo {
    position: relative;
    flex: 1;
    height: 22px;
    border: 1px solid #777a88;
    border-radius: 3px;
    background: linear-gradient(#f6f6f8, #d9dae0);
}

.combo select {
    width: 100%;
    height: 20px;
    padding-left: 3px;
    appearance: none;
    color: #000;
}

.combo svg {
    position: absolute;
    top: 7px;
    right: 4px;
    width: 9px;
    height: 9px;
    pointer-events: none;
}

.combo.off {
    flex: none;
    margin-top: 3px;
    height: 21px;
    color: #999;
    border-color: #b0b2bc;
    background: #f2f2f5;
}

.combo.off select {
    color: #888;
    opacity: 1;
}

.indent {
    padding: 0 8px 6px 36px;
}

.caption {
    height: 22px;
    line-height: 20px;
    color: #333;
}

.caption.more {
    margin-top: 3px;
}

.std-views {
    display: grid;
    grid-template-columns: repeat(4, 23px);
    gap: 4px;
    padding: 12px 0 4px;
}

.std-views text {
    font-family: "Liberation Serif", serif;
    font-size: 13px;
    font-weight: bold;
    fill: #1c3fae;
}

.std-views .c1 {
    grid-column: 1;
}

.std-views .c3 {
    grid-column: 3;
}

.std-views button,
.styles-row button {
    display: flex;
    align-items: center;
    justify-content: center;
    height: 23px;
    border: 1px solid #898b96;
    border-radius: 4px;
    background: linear-gradient(#fff, #dcdde6);
}

.listbox {
    position: relative;
    width: 116px;
    height: 70px;
    margin-top: 5px;
    padding: 1px;
    border: 1px solid #6e7180;
    background: #fff;
}

.listbox label {
    display: flex;
    align-items: center;
    gap: 2px;
    height: 16px;
    padding-left: 2px;
    line-height: 16px;
    color: #000;
    white-space: nowrap;
}

.listbox input {
    width: 12px;
    height: 12px;
    flex-shrink: 0;
    appearance: none;
    border: 1px solid #8a8c94;
    background: #e4e5e9;
}

.listbox input:checked {
    background: #fff;
}

.listbox input:checked::after {
    content: "✓";
    display: block;
    font-size: 12px;
    font-weight: bold;
    line-height: 10px;
    color: #27407d;
}

.listbox .sel {
    color: #fff;
    background: #3390ea;
}

.hscroll {
    display: flex;
    align-items: center;
    gap: 4px;
    height: 17px;
    width: 96px;
    padding: 0 4px;
    background: #f0f0f3;
    font-size: 12px;
}

.hscroll i {
    width: 41px;
    height: 14px;
    margin-right: auto;
    border: 1px solid #888;
    border-radius: 2px;
    background: linear-gradient(#f5f5f7, #ccced4);
    font-size: 8px;
    font-style: normal;
    line-height: 12px;
    text-align: center;
}

.vscroll {
    position: absolute;
    top: 0;
    right: 0;
    width: 16px;
    height: 68px;
    background: #f3f3f6;
}

.vscroll::after,
.scrollbar .up,
.scrollbar .dn {
    content: "";
    display: block;
    width: 0;
    height: 0;
    margin: 7px auto;
    border: 3px solid transparent;
    border-top-width: 0;
    border-bottom: 4px solid #333;
}

.styles-row {
    display: flex;
    gap: 2px;
    padding: 3px 0 7px 36px;
}

.styles-row button {
    width: 24px;
    height: 24px;
    flex-shrink: 0;
}

.styles-row .on {
    background: #b5b5d4;
    border-color: #7e7e9e;
}

.radios {
    padding-top: 3px;
    padding-bottom: 6px;
}

.radios label {
    display: flex;
    align-items: center;
    gap: 4px;
    height: 18px;
    color: #000;
    white-space: nowrap;
}

.radios input[type="radio"] {
    width: 12px;
    height: 12px;
    flex-shrink: 0;
    appearance: none;
    border: 1px solid #888b98;
    border-radius: 50%;
    background: #e9e9ec;
}

.radios input[type="radio"]:checked {
    background: radial-gradient(circle, #3c9ad0 1px, #153a5c 3px, #eef 4px);
}

.radios.roomy {
    padding-bottom: 5px;
}

.ratio {
    display: block;
    width: 60px;
    height: 20px;
    margin-top: 4px;
    padding-left: 4px;
    border: 1px solid #a5a7b3;
    color: #888;
    background: #eceef3;
}

.more-props {
    display: block;
    width: 96px;
    height: 22px;
    margin: 24px 0 0 32px;
    border: 1px solid #777;
    border-radius: 3px;
    background: #f4f4f6;
}

.scrollbar {
    display: flex;
    flex-direction: column;
    width: 16px;
    flex-shrink: 0;
    margin-right: 3px;
    background: #f0f0f2;
}

.scrollbar .thumb {
    display: flex;
    align-items: center;
    justify-content: center;
    flex: 1;
    margin-bottom: 24px;
    border: 1px solid #8d8f98;
    border-radius: 2px;
    background: linear-gradient(90deg, #f4f4f6, #d5d6db 60%, #b9bbc4);
}

.thumb i {
    width: 7px;
    height: 8px;
    background: repeating-linear-gradient(#555 0 1px, transparent 1px 3px);
}

.scrollbar .dn {
    transform: rotate(180deg);
}

.splitter {
    position: absolute;
    left: 188px;
    top: 372px;
    width: 9px;
    height: 26px;
    padding: 3px 2px;
    background: #cfd3e6;
    border: 1px solid #777a95;
    border-radius: 0 3px 3px 0;
}

.sheet {
    position: relative;
    flex: 1;
    min-width: 0;
    overflow: hidden;
}

.drawing {
    width: 100%;
    height: 100%;
}

.tip {
    position: absolute;
    left: 68px;
    top: 650px;
    padding: 0 5px;
    height: 22px;
    line-height: 20px;
    color: #555;
    border: 1px solid #666;
    border-radius: 3px;
    background: linear-gradient(#fff, #e4e5f0);
    box-shadow: 2px 2px 2px #888;
}

.task-pane {
    position: absolute;
    right: 0;
    top: 40px;
    display: flex;
    flex-direction: column;
}

.task-pane button {
    display: flex;
    align-items: center;
    padding-left: 3px;
    width: 24px;
    height: 24px;
    background: linear-gradient(90deg, #c0c3d8, #a9acc6);
    border: 1px solid #777a95;
    border-right: none;
    border-radius: 4px 0 0 4px;
}

.task-pane button.active {
    background: #eef0f8;
}

.callout {
    position: absolute;
    left: 137px;
    top: 361px;
    pointer-events: none;
}

/* hojas y barra de estado */
.sheet-tabs {
    display: flex;
    height: 16px;
    flex-shrink: 0;
    background: #e1e4ed;
    border-top: 1px solid #000;
}

.nav {
    display: flex;
    align-items: center;
    justify-content: center;
    width: 16px;
    height: 14px;
    background: #b3b6cd;
    border: 1px solid #8f92aa;
}

.nav svg {
    fill: #8286a2;
}

.sheet-tab {
    display: flex;
    align-items: center;
    gap: 1px;
    width: 69px;
    height: 15px;
    margin-left: 1px;
    padding-left: 9px;
    line-height: 14px;
    color: #000;
    background: #eceef6;
    border: 2px solid #565a70;
    border-top: none;
}

.add-sheet {
    display: flex;
    justify-content: center;
    width: 34px;
    height: 14px;
    background: #b8bbd0;
    border-right: 2px solid #565a70;
    border-bottom: 2px solid #565a70;
}

.statusbar {
    position: relative;
    display: flex;
    align-items: center;
    height: 20px;
    flex-shrink: 0;
    padding-left: 2px;
    color: #111;
    white-space: nowrap;
    background: linear-gradient(#d2d4e4, #b6b9cf);
    border-top: 1px solid #666980;
    border-bottom: 2px solid #55586c;
}

.product {
    flex: 1;
}

.x {
    width: 81px;
}

.y {
    width: 80px;
}

.z {
    width: 32px;
}

.state {
    width: 42px;
    border-right: 1px solid #e6e8f2;
}

.editing {
    width: 198px;
    padding-left: 12px;
    border-right: 1px solid #e6e8f2;
}

.units {
    width: 138px;
    padding-left: 72px;
}

.tag {
    margin: 0 5px 0 51px;
}

.watermark {
    position: absolute;
    right: 20px;
    top: -5px;
    font-family: "DejaVu Sans", "Noto Sans CJK SC", sans-serif;
    font-size: 15px;
    font-weight: bold;
    line-height: 22px;
    color: #fff;
    text-decoration: none;
    text-shadow: 1px 0 #e3262b, -1px 0 #e3262b, 0 1px #e3262b, 0 -1px #e3262b, 1px 1px #e3262b, -1px -1px #e3262b;
}

.watermark span {
    font-size: 18px;
}
```
